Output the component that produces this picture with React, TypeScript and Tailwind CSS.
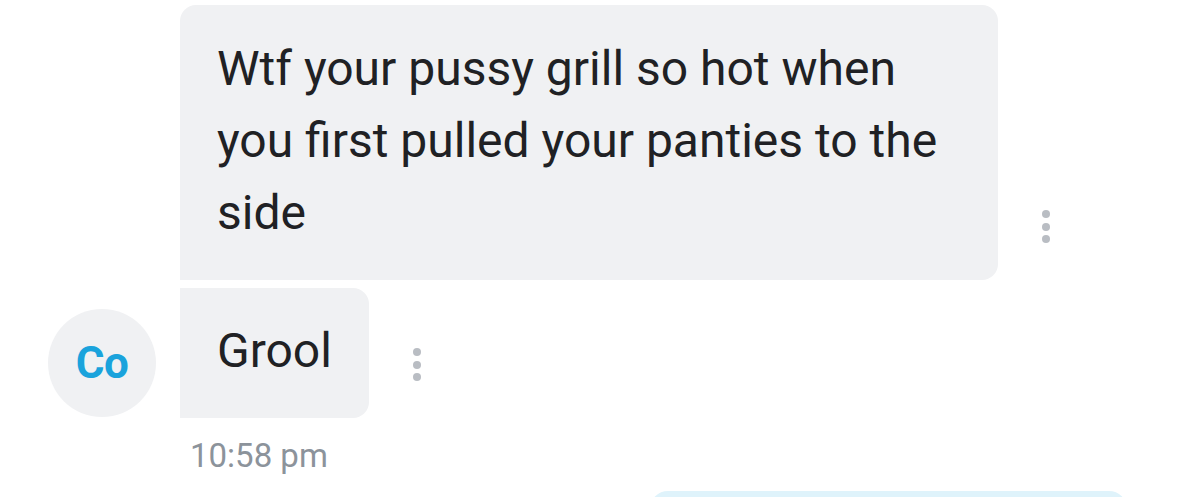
export default function App() {
  const Dots = () => (
    <div className="flex flex-col gap-[4.5px] mb-[37px] ml-[44px]">
      <span className="block h-2 w-2 rounded-full bg-[#b9bdc3]" />
      <span className="block h-2 w-2 rounded-full bg-[#b9bdc3]" />
      <span className="block h-2 w-2 rounded-full bg-[#b9bdc3]" />
    </div>
  )

  return (
    <div
      className="w-[1179px] h-[497px] overflow-hidden bg-white text-[#202124]"
      style={{ fontFamily: "Roboto, 'Noto Sans', sans-serif" }}
    >
      <div className="pt-[5px] flex flex-col gap-2">
        {/* first message */}
        <div className="flex items-end pl-[180px]">
          <div className="w-[818px] bg-[#f0f1f3] rounded-t-[16px] rounded-br-[16px] px-[37px] pt-[28px] pb-[31px] text-[48px] leading-[72px]">
            Wtf your pussy grill so hot when you first pulled your panties to the side
          </div>
          <Dots />
        </div>

        {/* second message with avatar */}
        <div className="flex items-end pl-[48px]">
          <div className="w-[108px] h-[108px] rounded-full bg-[#f0f1f3] flex items-center justify-center mr-[24px] mb-[1px]">
            <span className="text-[44px] font-bold text-[#1aa3dc] tracking-[-0.5px]">Co</span>
          </div>
          <div className="bg-[#f0f1f3] rounded-tr-[16px] rounded-br-[16px] px-[37px] pt-[27px] pb-[31px] text-[48px] leading-[72px]">
            Grool
          </div>
          <Dots />
        </div>
      </div>

      <div className="pl-[190px] mt-[19px] text-[33px] leading-[38px] text-[#8c939b]">10:58 pm</div>

      <div className="mt-[16px] ml-[650px] w-[477px] h-[40px] rounded-t-[18px] bg-[#dff3fb]" />
    </div>
  )
}
